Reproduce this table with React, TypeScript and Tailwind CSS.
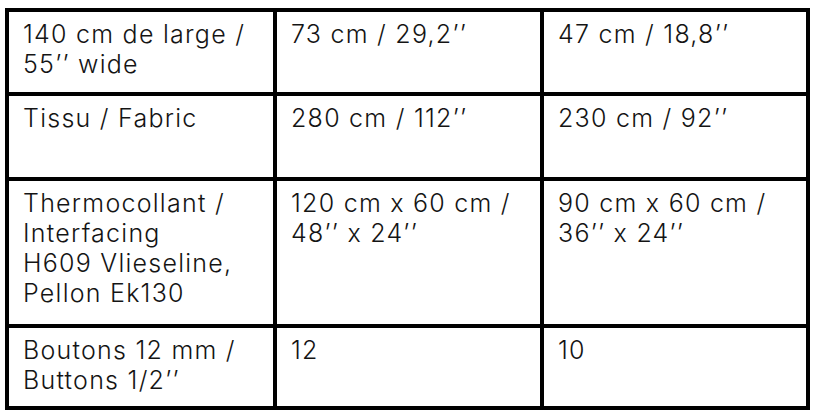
const rows: string[][] = [
  ['140 cm de large /\n55’’ wide', '73 cm / 29,2’’', '47 cm / 18,8’’'],
  ['Tissu / Fabric', '280 cm / 112’’', '230 cm / 92’’'],
  [
    'Thermocollant /\nInterfacing\nH609 Vlieseline,\nPellon Ek130',
    '120 cm x 60 cm /\n48’’ x 24’’',
    '90 cm x 60 cm /\n36’’ x 24’’',
  ],
  ['Boutons 12 mm /\nButtons 1/2’’', '12', '10'],
]

export default function App() {
  return (
    <div className="w-[816px] h-[418px] bg-white pt-[8px] pl-[5px]">
      <div
        className="grid w-fit grid-cols-[268px_267px_266px] grid-rows-[84px_85px_147px_82px] border-l-4 border-t-4 border-black text-[#141414]"
        style={{ fontFamily: 'Inter, "Liberation Sans", sans-serif' }}
      >
        {rows.map((row, r) =>
          row.map((cell, c) => (
            <div
              key={`${r}-${c}`}
              className="border-r-4 border-b-4 border-black pl-[14px] pt-[7px] text-[25px] font-light tracking-[0.05em] leading-[30px] whitespace-pre-line"
            >
              {cell}
            </div>
          )),
        )}
      </div>
    </div>
  )
}
